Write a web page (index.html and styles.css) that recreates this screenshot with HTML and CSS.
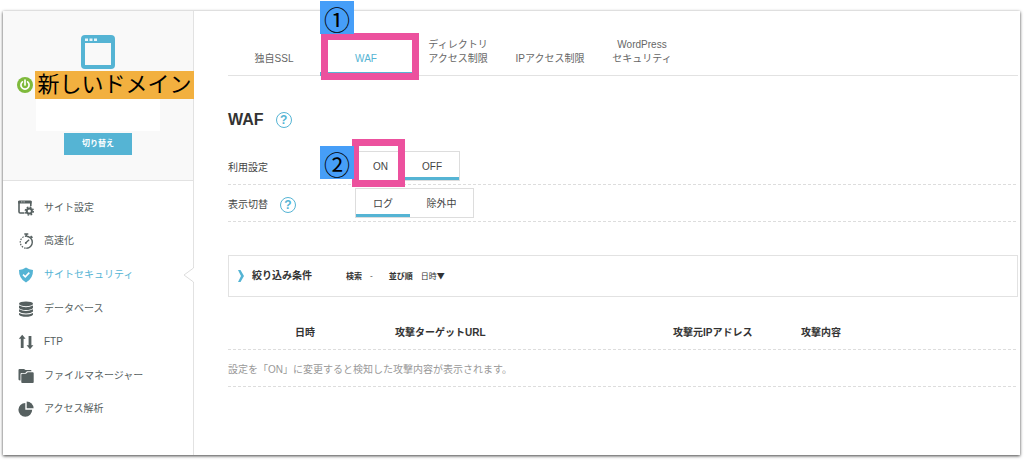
FILE: index.html
```html
<!DOCTYPE html>
<html lang="ja">
<head>
<meta charset="utf-8">
<title>WAF</title>
<meta name="viewport" content="width=device-width, initial-scale=1">
<link rel="stylesheet" href="styles.css">
</head>
<body>
<div class="frame">
  <aside class="sidebar">
    <div class="site">
      <svg class="site-icon" viewBox="0 0 34 34" aria-hidden="true">
        <rect width="34" height="34" rx="4" fill="#55b4d4"/>
        <rect x="4" y="8" width="26" height="22" fill="#f9f9f9"/>
        <path d="M4 3.500h3v2.500h-3zM8.500 3.500h3v2.500h-3zM13 3.500h3v2.500h-3z" fill="#e8f5fa"/>
      </svg>
      <div class="domain">
        <svg class="power" viewBox="0 0 16 16" aria-hidden="true">
          <circle cx="8" cy="8" r="8" fill="#7fba3c"/>
          <path d="M5.400 4.800a4.100 4.100 0 1 0 5.200 0M8 3v5" fill="none" stroke="#fff" stroke-width="1.700" stroke-linecap="round"/>
        </svg>
        <strong class="domain-name">新しいドメイン</strong>
      </div>
      <div class="site-blank"></div>
      <button class="switch" type="button">切り替え</button>
    </div>
    <nav class="menu">
      <a class="menu-item" href="#">
        <svg class="menu-icon" viewBox="0 0 16 16" aria-hidden="true">
          <path d="M6.500 13H2.200Q1 13 1 11.800V1.800H12.800V6" fill="none" stroke="#566060" stroke-width="1.600"/>
          <path d="M.2 1.800Q.2.500 1.500.500H12.400Q13.600.500 13.600 1.800V3.400H.2z" fill="#566060"/>
          <path d="M3 1.900h4" stroke="#fff" stroke-width=".6" stroke-dasharray="1 .6"/>
          <circle cx="11.300" cy="11" r="2.600" fill="none" stroke="#566060" stroke-width="2"/>
          <circle cx="11.300" cy="11" r="4" fill="none" stroke="#566060" stroke-width="1.400" stroke-dasharray="1.700 1.442"/>
        </svg>
        <span>サイト設定</span></a>
      <a class="menu-item" href="#">
        <svg class="menu-icon" viewBox="0 0 16 16" fill="none" stroke="#566060" aria-hidden="true">
          <path d="M8.300 3.200A6 6 0 0 1 8.300 15.200" stroke-width="1.400"/>
          <path d="M8.300 3.200A6 6 0 0 0 8.300 15.200" stroke-width="1.200" stroke-dasharray="1.500 1.200"/>
          <path d="M6.300 1h4M8.300 1v2.200" stroke-width="1.700"/>
          <path d="M12.600 3.200l1.800 1.600" stroke-width="1.800"/>
          <path d="M7.600 10l3.500-3.200" stroke-width="1.300"/>
          <circle cx="7.800" cy="9.900" r="1" fill="#566060" stroke="none"/>
        </svg>
        <span>高速化</span></a>
      <a class="menu-item active" href="#" aria-current="page">
        <svg class="menu-icon" viewBox="0 0 16 16" aria-hidden="true">
          <path d="M8 .5Q4.800 2.500 1 3Q.7 11.500 8 15.500Q15.300 11.500 15 3Q11.200 2.500 8 .5z" fill="#55b4d4"/>
          <path d="M5 7.600l2.300 2.200 4-4.200" fill="none" stroke="#fff" stroke-width="1.600"/>
        </svg>
        <span>サイトセキュリティ</span>
        <svg class="notch" viewBox="0 0 11 16" aria-hidden="true">
          <path d="M10.500 0v1L1 8l9.500 7v1" fill="#fff"/>
          <path d="M10.500 1v14" stroke="#fff" stroke-width="2"/>
          <path d="M10.500 0v1L1 8l9.500 7v1" fill="none" stroke="#ddd"/>
        </svg></a>
      <a class="menu-item" href="#">
        <svg class="menu-icon" viewBox="0 0 16 16" fill="#566060" aria-hidden="true">
          <ellipse cx="8" cy="2.800" rx="7" ry="2.400"/>
          <path d="M1 4.500Q8 8 15 4.500V7Q13 9 8 9T1 7zM1 8.300Q8 11.800 15 8.300v2.200Q13 12.400 8 12.400T1 10.500zM1 11.900Q8 15.300 15 11.900V13.700Q13 15.700 8 15.700T1 13.700z"/>
        </svg>
        <span>データベース</span></a>
      <a class="menu-item" href="#">
        <svg class="menu-icon" viewBox="0 0 16 16" fill="#566060" aria-hidden="true">
          <path d="M4.200.8L7.600 4.800H5.600V14H2.800V4.800H.8zM12 15.200L8.600 11.200h2V2h2.800v9.200h2z"/>
        </svg>
        <span>FTP</span></a>
      <a class="menu-item" href="#">
        <svg class="menu-icon" viewBox="0 0 16 16" fill="#566060" aria-hidden="true">
          <path d="M.5 11.500V2Q.5 1 1.500 1H6L7.500 2H12.500Q13.500 2 13.500 3.300H9L7.200 5H3.500Q2.500 5 2.500 6v6.500Q.5 12.500.5 11.500z"/>
          <path d="M3.300 6.800Q3.300 5.800 4.300 5.800H8L9.700 4.200H14.700Q15.700 4.200 15.700 5.200v9Q15.700 15 14.700 15H4.300Q3.300 15 3.300 14.200z"/>
        </svg>
        <span>ファイルマネージャー</span></a>
      <a class="menu-item" href="#">
        <svg class="menu-icon" viewBox="0 0 16 16" fill="#566060" aria-hidden="true">
          <path d="M7.300 1.900V8.800H14.200A6.900 6.900 0 1 1 7.300 1.900z"/>
          <path d="M8.700.4A6.900 6.900 0 0 1 15.600 7.300H8.700z"/>
        </svg>
        <span>アクセス解析</span></a>
    </nav>
  </aside>

  <main class="main">
    <nav class="tabs">
      <a class="tab" href="#">独自SSL</a>
      <a class="tab active" href="#" aria-current="page">WAF
        <span class="mark mark-tab"></span><span class="step step-tab">①</span></a>
      <a class="tab" href="#">ディレクトリ<br>アクセス制限</a>
      <a class="tab" href="#">IPアクセス制限</a>
      <a class="tab" href="#">WordPress<br>セキュリティ</a>
    </nav>

    <header class="heading">
      <h1>WAF</h1>
      <button class="help" type="button" aria-label="ヘルプ">?</button>
    </header>

    <section class="settings">
      <div class="setting rule">
        <span class="setting-label" id="use">利用設定</span>
        <div class="toggle" role="group" aria-labelledby="use">
          <button class="option" type="button">ON</button>
          <button class="option selected" type="button" aria-pressed="true">OFF</button>
          <span class="mark mark-on"></span><span class="step step-on">②</span>
        </div>
      </div>
      <div class="setting rule">
        <span class="setting-label"><span id="view">表示切替</span>
          <button class="help" type="button" aria-label="ヘルプ">?</button></span>
        <div class="toggle" role="group" aria-labelledby="view">
          <button class="option selected" type="button" aria-pressed="true">ログ</button>
          <button class="option wide" type="button">除外中</button>
        </div>
      </div>
    </section>

    <button class="filter" type="button">
      <svg class="chevron" viewBox="0 0 6 12" aria-hidden="true"><path d="M0 0H2.500L6 6 2.500 12H0L3 6z" fill="#55b4d4"/></svg>
      <span class="filter-title">絞り込み条件</span>
      <span class="filter-pair"><b>検索</b><span>-</span></span>
      <span class="filter-pair"><b>並び順</b><span>日時▼</span></span>
    </button>

    <table class="log">
      <thead>
        <tr class="rule"><th class="date">日時</th><th class="target">攻撃ターゲットURL</th><th class="ip">攻撃元IPアドレス</th><th>攻撃内容</th></tr>
      </thead>
      <tbody>
        <tr class="rule"><td colspan="4">設定を「ON」に変更すると検知した攻撃内容が表示されます。</td></tr>
      </tbody>
    </table>
  </main>
</div>
</body>
</html>
```
FILE: styles.css
```css
* { box-sizing: border-box; }

body {
  margin: 0;
  padding: 11px 4px 5px 3px;
  background: #fff;
  color: #444;
  font: 10px/14px "Liberation Sans", "Noto Sans CJK JP", sans-serif;
}

button { font: inherit; color: inherit; padding: 0; border: 0; background: none; }
a { color: inherit; text-decoration: none; }

.frame {
  display: flex;
  min-height: calc(100vh - 16px);
  background: #fff;
  box-shadow: 0 1px 3px rgba(0, 0, 0, .75);
}

/* Sidebar */
.sidebar { flex: 0 0 191px; border-right: 1px solid #e2e2e2; }

.site {
  display: flex;
  flex-direction: column;
  align-items: center;
  height: 170px;
  padding-top: 24px;
  background: #f9f9f9;
  border-bottom: 1px solid #e2e2e2;
}
.site-icon { width: 34px; height: 34px; flex: none; }
.domain {
  display: flex;
  align-items: center;
  align-self: stretch;
  gap: 2px;
  margin-top: 2px;
  padding-left: 14px;
}
.power { width: 16px; height: 16px; flex: none; }
.domain-name {
  flex: 1;
  margin-right: -1px;
  background: #f2b03f;
  color: #000;
  font-size: 22px;
  line-height: 28px;
  font-weight: 400;
  text-align: center;
  white-space: nowrap;
}
.site-blank { width: 124px; height: 32px; background: #fff; flex: none; }
.switch {
  width: 68px;
  height: 22px;
  margin-top: 2px;
  background: #55b4d4;
  color: #fff;
  font-size: 8px;
  font-weight: 700;
}

.menu { display: flex; flex-direction: column; height: 235px; margin-top: 10px; }
.menu-item {
  position: relative;
  flex: 1;
  display: flex;
  align-items: center;
  gap: 10px;
  padding-left: 15px;
  color: #566060;
}
.menu-icon { width: 16px; height: 16px; }
.menu-item.active { color: #55b4d4; }
.notch { position: absolute; right: -1px; width: 11px; height: 16px; }

/* Main column */
.main { flex: 1; min-width: 0; padding: 0 2px 0 34px; }

.tabs { display: flex; height: 65px; border-bottom: 1px solid #e2e2e2; }
.tab {
  position: relative;
  flex: 0 0 92px;
  display: flex;
  flex-direction: column;
  justify-content: flex-end;
  padding-bottom: 9px;
  color: #666;
  text-align: center;
  white-space: nowrap;
}
.tab.active {
  margin-bottom: -1px;
  padding-bottom: 6px;
  border-bottom: 4px solid #55b4d4;
  color: #55b4d4;
}

/* Step callouts */
.mark { position: absolute; border: 7px solid #ec519e; pointer-events: none; }
.mark-tab { left: 1px; top: 22px; width: 98px; height: 47px; }
.mark-on { left: -4px; top: -13px; width: 53px; height: 48px; }
.step {
  position: absolute;
  width: 34px;
  height: 33px;
  background: #469ef8;
  color: #000;
  font: 26px/35px "Noto Sans CJK JP", sans-serif;
  text-align: center;
}
.step-tab { left: 0; top: -10px; }
.step-on { left: -36px; top: -6px; }

.heading { display: flex; align-items: center; gap: 12px; height: 20px; margin-top: 34px; }
h1 { margin: 0; font-size: 16px; line-height: 20px; font-weight: 700; color: #333; }
.help {
  width: 16px;
  height: 16px;
  border: 1px solid #55b4d4;
  border-radius: 50%;
  color: #55b4d4;
  font-size: 12px;
  line-height: 14px;
  font-weight: 700;
}

.rule {
  background: repeating-linear-gradient(90deg, #ddd 0 3px, transparent 3px 5px) bottom / 100% 1px no-repeat;
}

.settings { margin-top: 18px; }
.setting { display: flex; align-items: center; height: 37px; padding-bottom: 2px; }
.setting-label { display: flex; align-items: center; gap: 12px; width: 127px; padding-top: 4px; }
.toggle { position: relative; display: flex; height: 30px; border: 1px solid #ddd; }
.option { width: 49px; padding-top: 5px; border-bottom: 3px solid transparent; }
.option.selected { width: 54px; border-color: #55b4d4; }
.option.wide { width: 63px; }

.filter {
  display: flex;
  align-items: center;
  width: 100%;
  height: 42px;
  margin-top: 33px;
  padding-left: 9px;
  border: 1px solid #e2e2e2;
  color: #333;
  font-size: 8px;
}
.chevron { width: 6px; height: 12px; }
.filter-title { margin: 0 34px 0 8px; font-size: 10px; font-weight: 700; }
.filter-pair { display: flex; gap: 8px; margin-right: 16px; font-family: "Noto Sans CJK JP", sans-serif; }

.log { width: 100%; margin-top: 16px; border-collapse: collapse; table-layout: fixed; }
.log th, .log td { height: 37px; padding: 2px 0 0; text-align: left; color: #333; }
.log td { color: #999; }
.log .date { width: 167px; padding-left: 67px; }
.log .target { width: 278px; }
.log .ip { width: 128px; }
```
